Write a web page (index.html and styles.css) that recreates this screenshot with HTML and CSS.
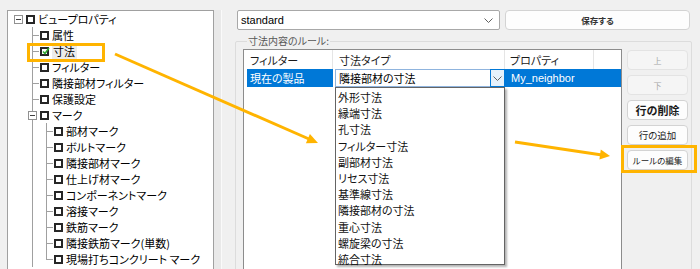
FILE: index.html
```html
<!DOCTYPE html>
<html lang="ja">
<head>
  <meta charset="UTF-8">
  <title>寸法内容のルール</title>
  <link rel="stylesheet" href="styles.css">
</head>
<body>
  <div class="app">
    <div class="tree-pane">
      <div class="row"><span class="cell x"></span><span class="cb"></span><span class="label">ビュープロパティ</span></div>
      <div class="row"><span class="cell"></span><span class="cell t"></span><span class="cb"></span><span class="label">属性</span></div>
      <div class="row"><span class="cell"></span><span class="cell t"></span><span class="cb checked"><svg width="9" height="9" viewBox="0 0 9 9"><polyline points="2,4.5 4,6.5 8,1" fill="none" stroke="#2fa82f" stroke-width="1.6"/></svg></span><span class="label sel">寸法</span></div>
      <div class="row"><span class="cell"></span><span class="cell t"></span><span class="cb"></span><span class="label">フィルター</span></div>
      <div class="row"><span class="cell"></span><span class="cell t"></span><span class="cb"></span><span class="label">隣接部材フィルター</span></div>
      <div class="row"><span class="cell"></span><span class="cell t"></span><span class="cb"></span><span class="label">保護設定</span></div>
      <div class="row"><span class="cell"></span><span class="cell x v"></span><span class="cb"></span><span class="label">マーク</span></div>
      <div class="row"><span class="cell"></span><span class="cell v"></span><span class="cell t"></span><span class="cb"></span><span class="label">部材マーク</span></div>
      <div class="row"><span class="cell"></span><span class="cell v"></span><span class="cell t"></span><span class="cb"></span><span class="label">ボルトマーク</span></div>
      <div class="row"><span class="cell"></span><span class="cell v"></span><span class="cell t"></span><span class="cb"></span><span class="label">隣接部材マーク</span></div>
      <div class="row"><span class="cell"></span><span class="cell v"></span><span class="cell t"></span><span class="cb"></span><span class="label">仕上げ材マーク</span></div>
      <div class="row"><span class="cell"></span><span class="cell v"></span><span class="cell t"></span><span class="cb"></span><span class="label">コンポーネントマーク</span></div>
      <div class="row"><span class="cell"></span><span class="cell v"></span><span class="cell t"></span><span class="cb"></span><span class="label">溶接マーク</span></div>
      <div class="row"><span class="cell"></span><span class="cell v"></span><span class="cell t"></span><span class="cb"></span><span class="label">鉄筋マーク</span></div>
      <div class="row"><span class="cell"></span><span class="cell v"></span><span class="cell t"></span><span class="cb"></span><span class="label">隣接鉄筋マーク(単数)</span></div>
      <div class="row"><span class="cell"></span><span class="cell v"></span><span class="cell l"></span><span class="cb"></span><span class="label">現場打ちコンクリート マーク</span></div>
    </div>

    <div class="splitter"></div>

    <div class="main">
      <div class="topbar">
        <div class="combo">
          <span>standard</span>
          <svg class="chev" width="9" height="5" viewBox="0 0 9 5"><polyline points="0.5,0.5 4.5,4.5 8.5,0.5" fill="none" stroke="#606060"/></svg>
        </div>
        <button class="btn save">保存する</button>
      </div>

      <fieldset class="group">
        <legend>寸法内容のルール:</legend>
        <div class="group-body">
          <div class="list">
            <div class="list-head">
              <div class="col c1">フィルター</div>
              <div class="col c2">寸法タイプ</div>
              <div class="col c3">プロパティ</div>
              <div class="col c4"></div>
            </div>
            <div class="list-row">
              <div class="sel-cell">現在の製品</div>
              <div class="editor">
                <div class="editor-box">
                  <span class="editor-text">隣接部材の寸法</span>
                  <span class="drop-btn"><svg width="9" height="5" viewBox="0 0 9 5"><polyline points="0.5,0.5 4.5,4.5 8.5,0.5" fill="none" stroke="#606060"/></svg></span>
                </div>
                <ul class="dropdown">
                  <li>外形寸法</li>
                  <li>縁端寸法</li>
                  <li>孔寸法</li>
                  <li>フィルター寸法</li>
                  <li>副部材寸法</li>
                  <li>リセス寸法</li>
                  <li>基準線寸法</li>
                  <li>隣接部材の寸法</li>
                  <li>重心寸法</li>
                  <li>螺旋梁の寸法</li>
                  <li>統合寸法</li>
                </ul>
              </div>
              <div class="sel-cell prop">My_neighbor</div>
            </div>
          </div>
          <div class="side">
            <button class="btn side-btn disabled">上</button>
            <button class="btn side-btn disabled">下</button>
            <button class="btn side-btn big">行の削除</button>
            <button class="btn side-btn">行の追加</button>
            <button class="btn side-btn small">ルールの編集</button>
          </div>
        </div>
      </fieldset>
    </div>

    <div class="hl hl-dim"></div>
    <div class="hl hl-edit"></div>
    <svg class="arrows" width="700" height="269" viewBox="0 0 700 269">
      <line x1="115" y1="54" x2="309" y2="139" stroke="#ffb400" stroke-width="3"/>
      <polygon points="318,143 305.9,143.2 309.9,134" fill="#ffb400"/>
      <line x1="515" y1="142" x2="602" y2="155" stroke="#ffb400" stroke-width="3"/>
      <polygon points="610,156 599.4,159.4 600.8,149.6" fill="#ffb400"/>
    </svg>
  </div>
</body>
</html>
```

FILE: styles.css
```css
body {
  margin: 0;
  background-color: #f0f0f0;
  font-family: "Noto Sans CJK JP", sans-serif;
  font-size: 11px;
  font-feature-settings: "palt";
  color: #000;
  overflow: hidden;
}
.app {
  position: relative;
  display: flex;
  width: 700px;
  height: 269px;
  overflow: hidden;
}

/* tree */
.tree-pane {
  margin: 10px 0 0 7px;
  width: 207px;
  height: 270px;
  box-sizing: border-box;
  background-color: white;
  border: 1px solid #a0a0a0;
  border-bottom: none;
  padding-left: 3px;
}
.row {
  display: flex;
  align-items: center;
  height: 16px;
  white-space: nowrap;
}
.cell {
  position: relative;
  flex: none;
  width: 14px;
  height: 16px;
}
.cell.v::before, .cell.t::before, .cell.l::before {
  content: "";
  position: absolute;
  left: 7px;
  top: 0;
  width: 1px;
  height: 16px;
  background-color: #a0a0a0;
}
.cell.l::before {
  height: 8px;
}
.cell.t::after, .cell.l::after {
  content: "";
  position: absolute;
  left: 7px;
  top: 8px;
  width: 7px;
  height: 1px;
  background-color: #a0a0a0;
}
.cell.x::after {
  content: "";
  position: absolute;
  left: 3px;
  top: 4px;
  width: 9px;
  height: 9px;
  box-sizing: border-box;
  border: 1px solid #919191;
  background: white linear-gradient(#404040, #404040) no-repeat center / 5px 1px;
}
.cb {
  flex: none;
  width: 9px;
  height: 9px;
  box-sizing: border-box;
  margin-left: 1px;
  border: 2px solid #262626;
  background-color: white;
  position: relative;
}
.cb.checked svg {
  position: absolute;
  left: -1px;
  top: -2px;
}
.label {
  margin-left: 3px;
  line-height: 16px;
}
.label.sel {
  background-color: #ececec;
  padding: 0 2px 0 1px;
}

.splitter {
  flex: none;
  width: 7px;
  margin-top: 10px;
  background-color: #e9e9e9;
  border-right: 1px solid #fafafa;
}

/* right side */
.main {
  flex: none;
  width: 457px;
  margin-left: 13px;
  padding-top: 10px;
}
.topbar {
  display: flex;
  gap: 5px;
  height: 20px;
  margin-left: 2px;
}
.combo {
  display: flex;
  align-items: center;
  justify-content: space-between;
  width: 263px;
  box-sizing: border-box;
  background-color: white;
  border: 1px solid #a8a8a8;
  border-radius: 2px;
  padding: 0 6px 0 3px;
  font-family: "Liberation Sans", sans-serif;
  font-size: 11px;
}
.btn {
  font-family: "Noto Sans CJK JP", sans-serif;
  font-feature-settings: "palt";
  background-color: #fdfdfd;
  border: 1px solid #d3d3d3;
  border-radius: 4px;
  color: #1a1a1a;
  padding: 0;
  cursor: pointer;
}
.save {
  width: 185px;
  height: 20px;
  font-size: 8.5px;
  font-weight: bold;
  color: #333;
}

.group {
  width: 457px;
  height: 240px;
  box-sizing: border-box;
  margin: 4px 0 0 0;
  padding: 0 3px 0 7px;
  border: 1px solid #dcdcdc;
  border-radius: 2px;
}
.group legend {
  margin-left: 4px;
  padding: 0 1px;
  font-size: 10px;
  line-height: 14px;
  color: #575757;
}
.group-body {
  display: flex;
  padding-top: 1px;
}
.list {
  width: 379px;
  height: 230px;
  box-sizing: border-box;
  background-color: white;
  border: 1px solid #8c8c8c;
}
.list-head {
  display: flex;
  height: 19px;
  line-height: 21px;
}
.col {
  box-sizing: border-box;
  border-right: 1px solid #e5e5e5;
  padding-left: 6px;
  color: #1a1a1a;
}
.c1 { width: 89px; }
.c2 { width: 172px; }
.c3 { width: 89px; padding-left: 5px; }
.c4 { flex: 1; border-right: none; }

.list-row {
  display: flex;
  height: 18px;
  line-height: 18px;
}
.sel-cell {
  margin-left: 3px;
  width: 86px;
  box-sizing: border-box;
  padding-left: 3px;
  background-color: #0078d7;
  color: white;
}
.sel-cell.prop {
  flex: 1;
  margin-left: 0;
  padding-left: 6px;
  font-family: "Liberation Sans", sans-serif;
  font-size: 11px;
}
.editor {
  position: relative;
  width: 172px;
}
.editor-box {
  display: flex;
  justify-content: space-between;
  margin-left: 2px;
  height: 18px;
  box-sizing: border-box;
  background-color: white;
  border: 1px solid #8fb4de;
  border-right: none;
}
.editor-text {
  padding-left: 3px;
  line-height: 16px;
}
.drop-btn {
  display: flex;
  align-items: center;
  justify-content: center;
  width: 15px;
  height: 18px;
  margin-top: -1px;
  box-sizing: border-box;
  background-color: #e5f1fb;
  border: 1px solid #0078d7;
}
.dropdown {
  position: absolute;
  left: 2px;
  top: 18px;
  width: 170px;
  height: 178px;
  box-sizing: border-box;
  margin: 0;
  padding: 1px 0 0 2px;
  list-style: none;
  background-color: white;
  border: 1px solid #646464;
  box-shadow: 2px 2px 2px rgba(0, 0, 0, 0.3);
  z-index: 2;
}
.dropdown li {
  height: 16.2px;
  line-height: 16.2px;
  color: #111;
}

.side {
  display: flex;
  flex-direction: column;
  gap: 5px;
  margin-left: 5px;
  padding-top: 1px;
}
.side-btn {
  width: 61px;
  height: 20px;
  font-size: 9.5px;
}
.side-btn.disabled {
  color: #a6a6a6;
  background-color: #f5f5f5;
  border-color: #e3e3e3;
  font-size: 8px;
}
.side-btn.big {
  font-size: 11px;
  font-weight: bold;
}
.side-btn.small {
  font-size: 8.5px;
}

/* annotations */
.hl {
  position: absolute;
  box-sizing: border-box;
  border: 3px solid #ffb400;
  pointer-events: none;
}
.hl-dim {
  left: 27px;
  top: 43px;
  width: 78px;
  height: 19px;
}
.hl-edit {
  left: 621px;
  top: 145px;
  width: 76px;
  height: 28px;
}
.arrows {
  position: absolute;
  left: 0;
  top: 0;
  pointer-events: none;
  z-index: 3;
}
```
